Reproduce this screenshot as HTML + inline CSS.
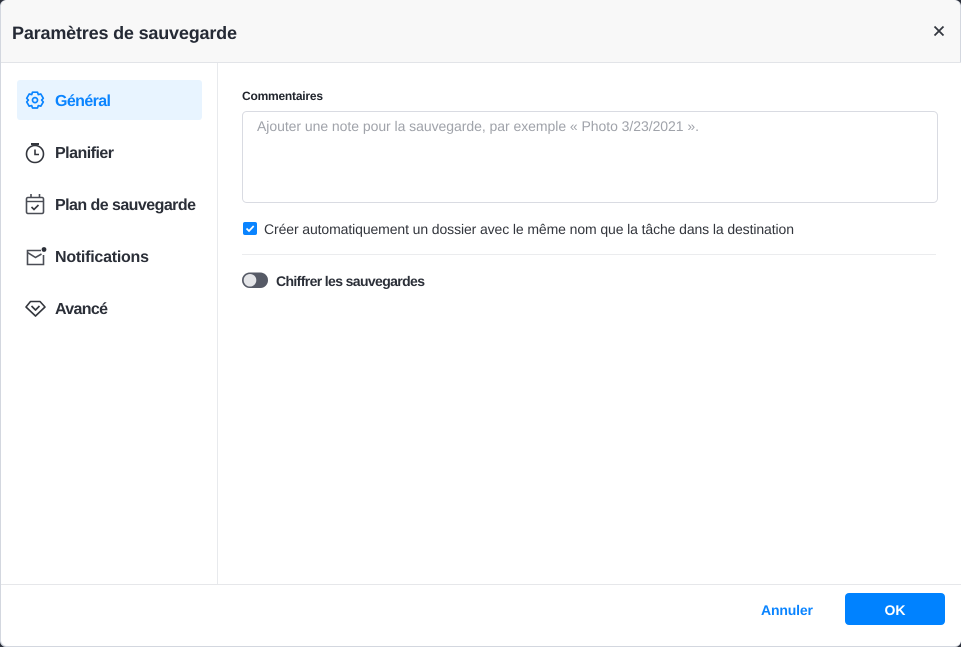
<!DOCTYPE html>
<html lang="fr"><head><meta charset="utf-8"><title>Paramètres de sauvegarde</title>
<style>html,body{margin:0;padding:0;background:#fff;overflow:hidden}svg{display:block}
text{font-family:"Liberation Sans",sans-serif;text-rendering:geometricPrecision}
.n{font-size:16px;font-weight:700;fill:#2b2f38}</style></head>
<body>
<svg width="961" height="647" viewBox="0 0 961 647" xmlns="http://www.w3.org/2000/svg">
<rect width="961" height="647" fill="#2b2f3a"/>
<rect x="0" y="0" width="961" height="647" rx="6" fill="#d3d7df"/>
<path d="M1 62V6a6 6 0 0 1 6-6H954a6 6 0 0 1 6 6V62Z" fill="#f8f8f8"/>
<path d="M1 62H961V640a6 6 0 0 1-6 6H7a6 6 0 0 1-6-6Z" fill="#fff"/>
<rect x="1" y="62" width="960" height="1" fill="#e2e4e8"/>
<rect x="217" y="63" width="1" height="521" fill="#e8eaed"/>
<rect x="1" y="584" width="960" height="1" fill="#e6e7ea"/>
<text x="12" y="39" font-size="18" font-weight="700" fill="#252a35" textLength="225" lengthAdjust="spacing">Paramètres de sauvegarde</text>
<path d="M934.500 26.500l9 9M943.500 26.500l-9 9" stroke="#33373f" stroke-width="1.800" fill="none"/>

<rect x="17" y="80" width="185" height="40" rx="3" fill="#e8f4ff"/>
<g fill="none" stroke="#0a84ff" stroke-width="1.700" stroke-linejoin="round">
<path d="M32.500 92.200h5l.8 2.400 2.500-.6 2.500 4.300-1.700 1.800 1.700 1.800-2.500 4.300-2.500-.6-.8 2.400h-5l-.8-2.400-2.500.6-2.500-4.300 1.700-1.800-1.700-1.800 2.500-4.300 2.500.6Z"/>
<circle cx="35" cy="100.100" r="2.500"/></g>
<text x="55" y="106" class="n" style="fill:#0a84ff" textLength="56" lengthAdjust="spacing">Général</text>

<g fill="none" stroke="#33363d" stroke-width="1.600">
<circle cx="35" cy="154" r="8.500"/><path d="M31 144h8" stroke-width="2"/><path d="M35 149.500v5h4"/></g>
<text x="55" y="158" class="n" textLength="59" lengthAdjust="spacing">Planifier</text>

<g fill="none" stroke="#4a4d55" stroke-width="1.600">
<rect x="26.500" y="197.500" width="17" height="16" rx="1.500"/><path d="M31 194v4M39.500 194v4"/><path d="M27 201.500h16" stroke-width="1.400"/><path d="M31.500 207l2.500 2.500 4.500-4.500" stroke="#33363d"/></g>
<text x="55" y="210" class="n" textLength="141" lengthAdjust="spacing">Plan de sauvegarde</text>

<g fill="none" stroke="#4a4d55" stroke-width="1.600">
<path d="M41 250.500H27.500v14h16V255"/><path d="M27.500 252.500l8 5 6-3.500"/></g>
<circle cx="44" cy="249.500" r="2.400" fill="#2b2f38"/>
<text x="55" y="262" class="n" textLength="94" lengthAdjust="spacing">Notifications</text>

<g fill="none" stroke="#33363d" stroke-width="1.600" stroke-linejoin="round">
<path d="M30.500 301.500h9.500l5 5.500-9.500 9-9.500-9Z"/><path d="M31.500 306l4 4 4-4"/></g>
<text x="55" y="314" class="n" textLength="53" lengthAdjust="spacing">Avancé</text>

<text x="242" y="100" font-size="12" font-weight="700" fill="#20242c" textLength="81" lengthAdjust="spacing">Commentaires</text>
<rect x="242.500" y="111.500" width="695" height="91" rx="4" fill="#fff" stroke="#d9dbe2"/>
<text x="257" y="131" font-size="14" fill="#a0a3aa" textLength="442" lengthAdjust="spacing">Ajouter une note pour la sauvegarde, par exemple « Photo 3/23/2021 ».</text>

<rect x="243" y="222" width="14" height="13" rx="2" fill="#0a84ff"/>
<path d="M246.500 228.500l2.500 2.500 4.700-5" stroke="#fff" stroke-width="1.700" fill="none"/>
<text x="264" y="234" font-size="14" fill="#33363d" textLength="530" lengthAdjust="spacing">Créer automatiquement un dossier avec le même nom que la tâche dans la destination</text>
<rect x="242" y="254" width="694" height="1" fill="#ebecee"/>

<rect x="242" y="272.500" width="26" height="15.500" rx="7.750" fill="#565a66"/>
<circle cx="250" cy="280.250" r="6.300" fill="#e4e5e8"/>
<text x="276" y="286" font-size="14" font-weight="700" fill="#2b2f38" textLength="149" lengthAdjust="spacing">Chiffrer les sauvegardes</text>

<text x="761" y="615" font-size="14" font-weight="700" fill="#0a84ff" textLength="52" lengthAdjust="spacing">Annuler</text>
<rect x="845" y="593" width="100" height="32" rx="4" fill="#0082ff"/>
<text x="895" y="615" font-size="14" font-weight="700" fill="#fff" text-anchor="middle">OK</text>
</svg>
</body></html>
